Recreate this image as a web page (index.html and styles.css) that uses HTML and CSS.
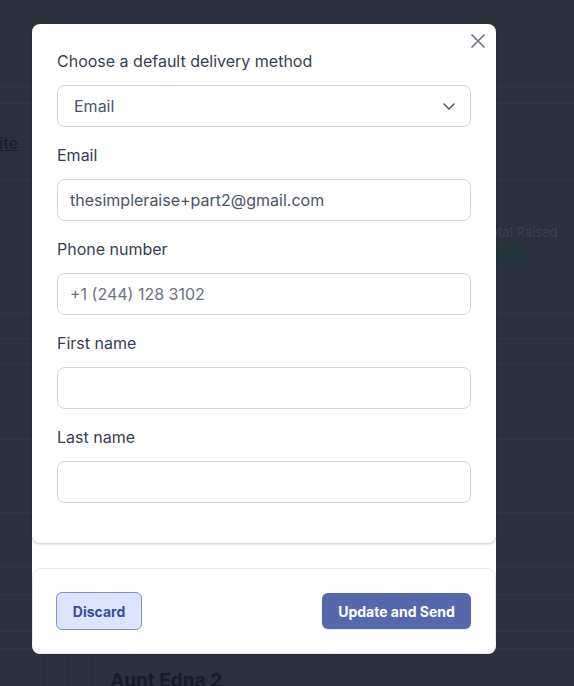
FILE: index.html
```html
<!DOCTYPE html>
<html lang="en">
<head>
<meta charset="utf-8">
<title>Delivery method</title>
<link rel="stylesheet" href="styles.css">
</head>
<body>
<div class="bg">
  <div class="bg-row r-top"></div>
  <div class="bg-row r-sub"></div>
  <div class="bg-row r-link"><a class="bg-link">ite</a></div>
  <div class="bg-row r-stats">
    <div class="stat">
      <div class="stat-label">Total Raised</div>
      <div class="stat-value">$50</div>
    </div>
  </div>
  <div class="bg-row h25"></div>
  <div class="bg-row h25"></div>
  <div class="bg-row h76"></div>
  <div class="bg-row h73"></div>
  <div class="bg-row h54"></div>
  <div class="bg-row h28"></div>
  <div class="bg-row h37"></div>
  <div class="bg-row h17"></div>
  <div class="bg-table">
    <div class="col c1"></div>
    <div class="col c2"></div>
    <div class="col c3"></div>
    <div class="col name">Aunt Edna 2</div>
  </div>
</div>

<div class="modal">
  <button class="close" aria-label="Close">
    <svg width="14" height="14" viewBox="0 0 14 14"><path d="M1 1L13 13M13 1L1 13" stroke="#6b7280" stroke-width="1.7" stroke-linecap="round" fill="none"/></svg>
  </button>
  <div class="form-card">
    <div class="field first">
      <label class="label">Choose a default delivery method</label>
      <div class="select">
        <span>Email</span>
        <svg width="12" height="7" viewBox="0 0 12 7"><path d="M1 1L6 6L11 1" stroke="#4b5563" stroke-width="1.5" stroke-linecap="round" stroke-linejoin="round" fill="none"/></svg>
      </div>
    </div>
    <div class="field">
      <label class="label">Email</label>
      <div class="input">thesimpleraise+part2@gmail.com</div>
    </div>
    <div class="field">
      <label class="label">Phone number</label>
      <div class="input placeholder">+1 (244) 128 3102</div>
    </div>
    <div class="field">
      <label class="label">First name</label>
      <div class="input"></div>
    </div>
    <div class="field">
      <label class="label">Last name</label>
      <div class="input"></div>
    </div>
  </div>
  <div class="footer">
    <button class="btn discard">Discard</button>
    <button class="btn primary">Update and Send</button>
  </div>
</div>
</body>
</html>
```

FILE: styles.css
```css
* { box-sizing: border-box; }

html, body {
  margin: 0;
  padding: 0;
}

body {
  width: 574px;
  height: 686px;
  overflow: hidden;
  position: relative;
  background: #2a303c;
  font-family: Inter, "Noto Sans", sans-serif;
}

.bg {
  display: flex;
  flex-direction: column;
}

.bg-row {
  border-bottom: 1px solid #2f3542;
  flex: none;
}

.r-top { height: 87px; }
.r-sub { height: 17px; }
.r-link { height: 77px; padding-top: 29px; }
.r-stats { height: 133px; display: flex; justify-content: flex-end; padding: 43px 0 0; }
.h25 { height: 25px; }
.h76 { height: 76px; }
.h73 { height: 73px; }
.h54 { height: 54px; }
.h28 { height: 28px; }
.h37 { height: 37px; }
.h17 { height: 17px; }

.bg-link {
  font-size: 16px;
  font-weight: 600;
  color: #1c2130;
  text-decoration: underline;
  margin-left: -1px;
}

.stat {
  width: 91px;
  display: flex;
  flex-direction: column;
  gap: 0;
}

.stat-label {
  font-size: 13px;
  color: #394050;
}

.stat-value {
  font-size: 21px;
  line-height: 28px;
  font-weight: 700;
  color: #1d3739;
}

.bg-table {
  display: flex;
  height: 60px;
}

.col {
  border-left: 1px solid #262b37;
}

.c1 { width: 43px; border-left: none; }
.c2 { width: 25px; }
.c3 { width: 24px; }

.name {
  padding: 20px 0 0 17px;
  font-size: 19px;
  font-weight: 700;
  color: #181d29;
}

/* Modal */
.modal {
  position: absolute;
  left: 32px;
  top: 24px;
  width: 464px;
  background: #fff;
  border-radius: 8px;
}

.close {
  position: absolute;
  top: 10px;
  right: 11px;
  width: 14px;
  height: 14px;
  padding: 0;
  border: none;
  background: none;
  display: flex;
}

.form-card {
  padding: 25px 25px 40px;
  border-radius: 8px;
  box-shadow: 0 1px 3px rgba(0, 0, 0, 0.18), 0 1px 2px rgba(0, 0, 0, 0.06);
  display: flex;
  flex-direction: column;
  gap: 16px;
}

.field {
  display: flex;
  flex-direction: column;
  gap: 12px;
}

.label {
  font-size: 16px;
  line-height: 24px;
  color: #374151;
}

.select, .input {
  height: 42px;
  border: 1px solid #d1d5db;
  border-radius: 8px;
  display: flex;
  align-items: center;
  font-size: 16px;
  color: #4b5563;
}

.select {
  justify-content: space-between;
  padding: 0 15px 0 16px;
}

.input {
  padding: 0 12px;
}

.placeholder {
  color: #6b7280;
}

.footer {
  margin-top: 25px;
  border: 1px solid #e5e7eb;
  border-radius: 10px;
  padding: 23px 24px 23px 23px;
  display: flex;
  justify-content: space-between;
  align-items: center;
}

.btn {
  font-family: Inter, "Noto Sans", sans-serif;
  font-size: 14px;
  font-weight: 700;
  border-radius: 6px;
  padding: 0;
}

.discard {
  width: 86px;
  height: 38px;
  background: #dce5fe;
  border: 1px solid #7b8fdb;
  color: #3d4e97;
}

.primary {
  width: 149px;
  height: 36px;
  background: #5568ab;
  border: none;
  color: #fff;
  box-shadow: 0 1px 2px rgba(0, 0, 0, 0.1);
}
```
